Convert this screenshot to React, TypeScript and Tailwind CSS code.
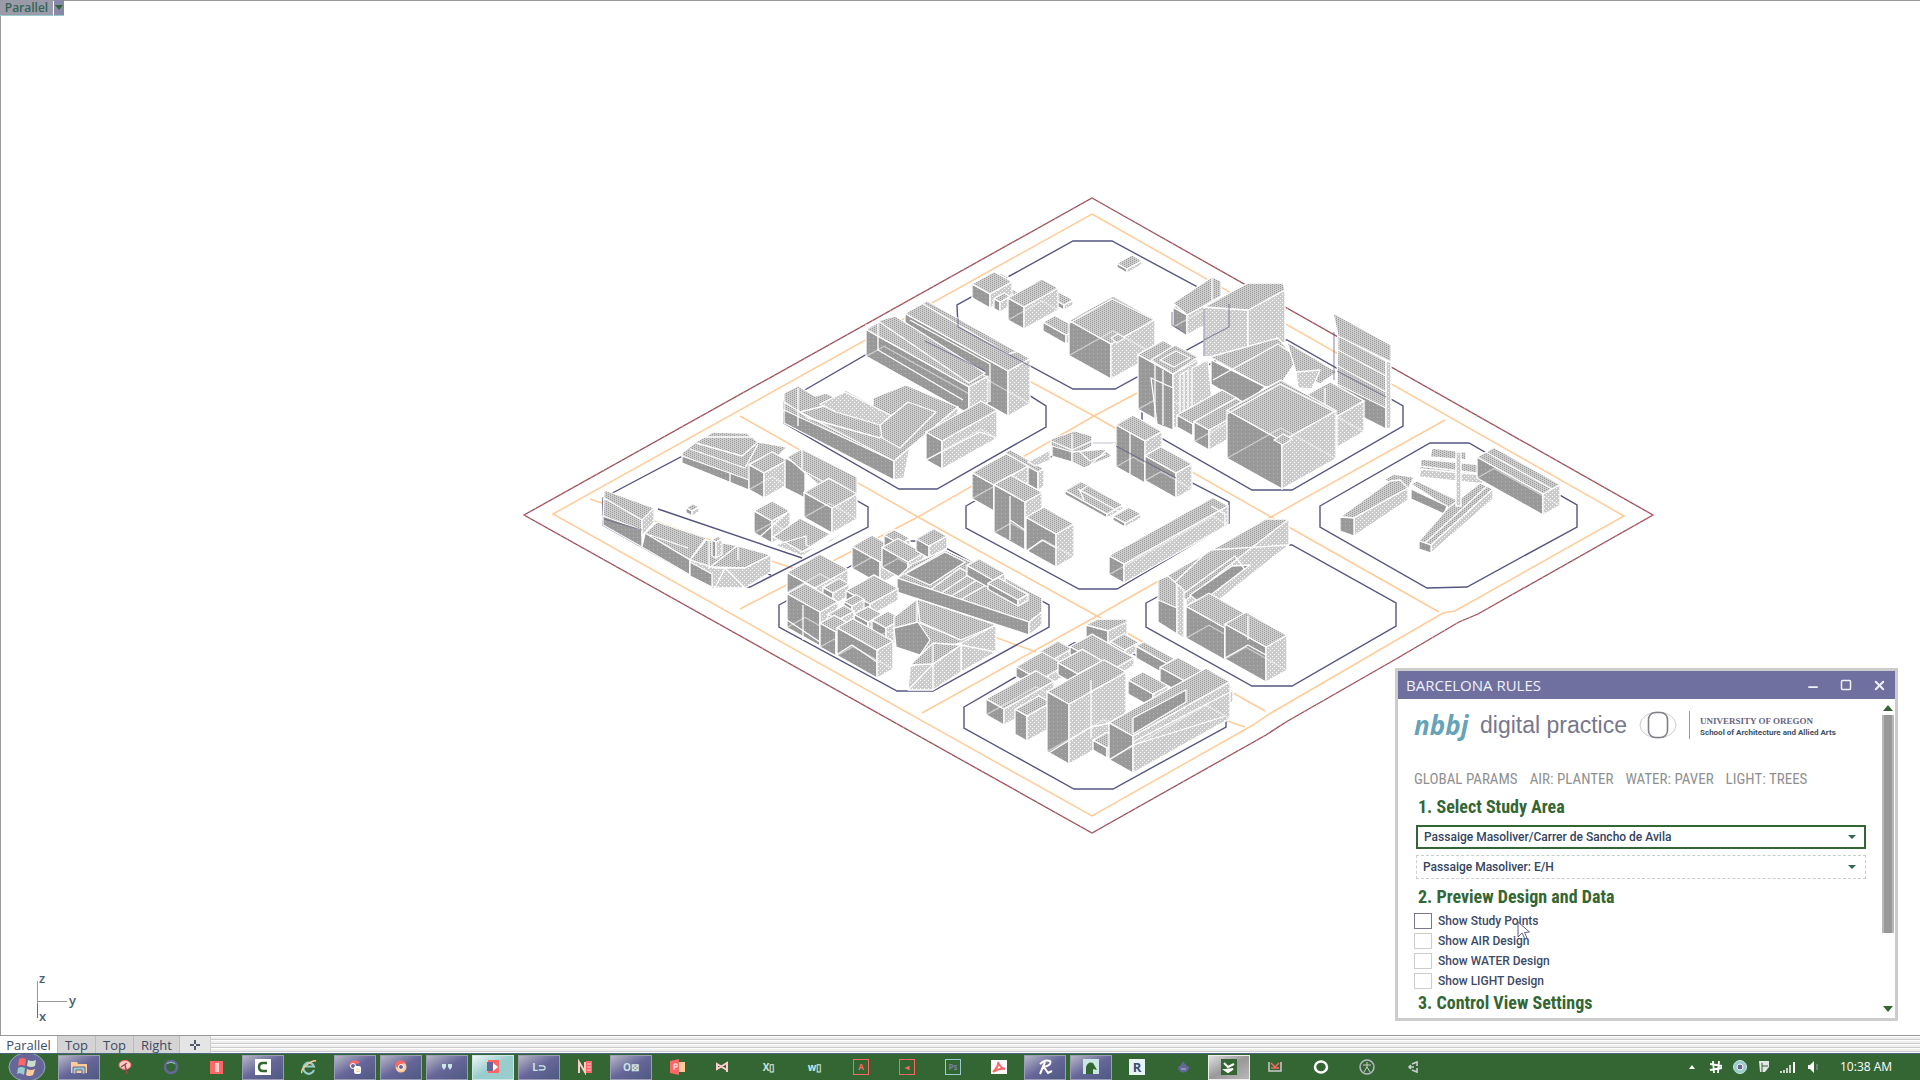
import { useState } from "react";
import type { ReactNode } from "react";
import { Minus, Square, X } from "lucide-react";

type Pt = [number, number];

// front top corner x/y, extent to the left, extent to the right, height
type BoxData = [number, number, number, number, number];

type Tone = "top" | "dark" | "light";
type Shape = { box: BoxData } | { poly: string; tone: Tone } | { line: string };

const SLOPE = 0.56;

const FILLS: Record<Tone, string> = {
  top: "url(#tone-top)",
  dark: "url(#tone-dark)",
  light: "url(#tone-light)",
};

const BLOCKS = [
  "1073,241 1112,241 1229,304 1229,327 1115,389 1073,389 958,327 957,305",
  "784,402 900,335 935,335 1046,406 1046,427 937,489 899,489 784,423",
  "1142,405 1250,340 1287,340 1403,406 1403,426 1292,490 1252,490 1142,427",
  "603,498 713,440 749,440 868,507 868,527 750,587 713,587 603,525",
  "966,506 1075,443 1115,443 1229,502 1229,523 1117,589 1079,589 966,528",
  "1320,506 1430,443 1469,443 1577,505 1577,527 1467,587 1427,588 1320,527",
  "1146,603 1254,545 1292,545 1396,603 1396,626 1292,686 1252,686 1146,627",
  "779,605 897,541 933,541 1049,605 1049,627 933,691 897,691 779,627",
  "964,707 1074,643 1113,643 1226,704 1226,727 1113,789 1074,789 964,728",
];

const STREETS = [
  "740,416 918,517 1097,616 1265,711",
  "1005,368 1094,416 1271,517 1439,612",
  "1445,420 1271,517 1097,616 922,713",
  "1137,393 1094,416 918,517 740,609",
  "590,499 795,569",
  "986,634 1036,652",
  "1186,707 1245,727",
];

const box = (...b: BoxData): Shape => ({ box: b });
const top = (poly: string): Shape => ({ poly, tone: "top" });
const dark = (poly: string): Shape => ({ poly, tone: "dark" });
const light = (poly: string): Shape => ({ poly, tone: "light" });
const line = (l: string): Shape => ({ line: l });

// back to front
const CITY: Shape[] = [
  // north block
  box(1127, 269, 10, 15, 4),
  box(1003, 281, 8, 6, 8),
  box(1010, 299, 16, 10, 8),
  box(990, 294, 18, 22, 14),
  box(1000, 302, 6, 10, 10),
  box(1064, 305, 28, 9, 5),
  box(1024, 307, 16, 34, 22),
  box(1066, 335, 23, 12, 9),
  box(1111, 344, 42, 44, 35),
  top("1111,338 1118,334 1125,338 1117,343"),
  line("1068,324 1112,299 1155,320"),
  box(1187, 315, 14, 34, 20),
  top("1173,303 1212,277 1221,281 1221,296 1187,315"),
  line("1212,277 1212,300"),

  // north west block
  box(1008, 371, 103, 22, 45),
  line("923,304 1008,354 1030,348"),
  line("905,335 990,381"),
  line("910,320 990,364 990,402"),
  dark("866,325 905,340 985,381 969,387"),
  box(969, 387, 103, 18, 27),
  top("878,321 895,316 985,373 969,383"),
  line("878,322 878,350 963,400"),
  light("969,387 988,376 988,402 969,412"),
  top("784,393 798,386 815,396 826,393 836,398 845,390 873,405 873,398 906,385 958,407 900,456 894,462 784,412"),
  top("800,412 840,402 886,427 880,438 808,418"),
  light("820,404 845,392 896,418 890,428 836,412"),
  top("880,425 908,402 936,412 900,448 882,438"),
  dark("784,410 894,461 894,480 784,423"),
  light("894,461 958,407 958,416 910,447 904,478 894,480"),
  line("798,388 798,426"),
  line("784,402 800,412 894,461"),
  line("906,479 935,480"),
  box(942, 441, 16, 55, 28),
  line("926,460 980,432 997,438"),

  // north east block
  light("1204,307 1248,310 1248,355 1204,357"),
  light("1248,310 1285,290 1285,342 1248,355"),
  top("1204,307 1248,283 1283,283 1285,290 1248,310"),
  top("1210,357 1278,338 1297,360 1280,385 1265,387"),
  dark("1211,360 1265,387 1245,405 1211,384"),
  line("1213,380 1278,344 1337,384"),
  top("1287,342 1337,372 1320,384 1296,372"),
  light("1296,372 1320,370 1312,389 1298,388"),
  dark("1338,336 1386,361 1386,429 1337,404"),
  top("1338,336 1386,361 1386,408 1337,384"),
  top("1333,313 1391,345 1391,362 1338,336"),
  light("1386,361 1391,362 1391,428 1386,429"),
  line("1338,350 1386,376"),
  line("1338,366 1386,392"),
  box(1173, 374, 35, 25, 55),
  dark("1151,378 1173,388 1173,430 1157,424"),
  top("1151,360 1175,345 1198,357 1173,374"),
  top("1160,360 1176,351 1190,358 1174,367"),
  light("1180,375 1188,370 1188,418 1180,414"),
  light("1192,368 1208,360 1212,400 1192,410"),
  line("1155,364 1155,418"),
  line("1163,370 1163,425"),
  line("1184,372 1184,420"),
  box(1193, 424, 16, 45, 12),
  box(1209, 430, 15, 42, 20),
  box(1337, 416, 34, 27, 31),
  line("1325,388 1325,430"),
  box(1282, 441, 55, 54, 48),
  top("1274,440 1283,434 1292,439 1283,445"),
  line("1227,414 1280,384 1335,412"),

  // west block
  top("682,453 696,442 713,432 747,433 758,442 787,447 764,470 749,485 682,456"),
  line("696,443 742,456 758,442"),
  line("700,437 752,437"),
  line("690,449 745,468 758,444"),
  dark("682,456 749,480 749,490 682,463"),
  line("730,473 730,484"),
  box(764, 473, 15, 23, 25),
  dark("785,458 805,468 805,498 785,488"),
  top("787,457 802,449 857,477 857,497 832,508 822,488"),
  line("802,449 802,470 857,500"),
  box(832, 508, 28, 25, 25),
  box(772, 521, 18, 18, 22),
  line("755,541 790,510"),
  top("773,537 800,518 830,534 802,552"),
  light("775,545 802,556 857,524 832,541 802,552 785,542"),
  line("782,543 806,536 806,545 815,548"),
  box(692, 511, 6, 7, 5),
  top("604,490 654,508 642,522 604,500"),
  top("604,498 642,520 642,535 603,520"),
  dark("603,516 642,530 642,547 603,525"),
  light("642,520 654,508 654,522 642,536"),
  top("645,533 657,522 706,538 690,560"),
  dark("645,533 690,560 690,575 642,547"),
  line("650,535 688,548"),
  top("690,560 706,540 735,545 771,555 745,568 712,567"),
  light("690,560 715,568 745,568 771,555 771,572 745,588 715,588 690,575"),
  dark("690,562 712,574 712,587 690,576"),
  line("709,540 709,568 738,545 738,560"),
  line("715,588 725,568 745,588"),
  box(716, 542, 4, 6, 16),

  // centre block
  top("1051,439 1075,431 1092,436 1092,446 1075,455 1051,452"),
  line("1051,441 1072,450 1092,441"),
  line("1072,434 1072,466"),
  dark("1052,446 1072,452 1072,462 1052,456"),
  top("1072,452 1104,449 1112,456 1084,468 1072,462"),
  line("1080,452 1090,461 1106,454"),
  line("1092,443 1115,443 1090,465"),
  box(1038, 472, 34, 6, 18),
  light("1028,462 1050,450 1050,460 1036,466"),
  box(994, 485, 22, 34, 26),
  box(1025, 502, 31, 17, 48),
  line("1010,496 1010,540"),
  line("1025,530 1010,520"),
  box(1056, 534, 30, 18, 33),
  line("1026,552 1042,540 1056,548"),
  box(1145, 441, 29, 17, 42),
  line("1130,432 1130,474"),
  box(1176, 473, 31, 16, 25),
  box(1107, 514, 42, 16, 4),
  line("1078,489 1118,511"),
  line("1090,484 1080,491 1084,500"),
  box(1125, 523, 12, 16, 4),
  box(1124, 564, 15, 104, 19),
  line("1211,506 1225,514 1225,526"),

  // east block
  top("1432,448 1466,452 1466,460 1430,457"),
  top("1421,459 1484,465 1484,482 1419,476"),
  line("1419,466 1484,474"),
  light("1421,469 1484,475 1484,484 1419,477"),
  box(1543, 494, 66, 17, 21),
  line("1486,452 1552,489"),
  top("1384,480 1394,474 1414,477 1408,489 1396,484"),
  top("1340,517 1354,518 1408,488 1400,480 1390,481"),
  light("1354,518 1408,488 1408,500 1354,536"),
  dark("1340,517 1354,518 1354,536 1340,531"),
  top("1411,484 1417,481 1461,502 1455,509 1447,507"),
  dark("1411,489 1447,506 1444,514 1411,499"),
  top("1419,541 1431,545 1493,489 1480,483 1447,509"),
  light("1431,545 1493,489 1493,499 1431,553"),
  dark("1419,541 1431,545 1431,553 1419,549"),
  line("1425,543 1487,486"),
  light("1456,452 1461,452 1461,506 1456,506"),

  // south east block
  light("1289,519 1289,545 1214,604 1186,610 1186,590"),
  top("1159,580 1168,575 1266,519 1289,519 1250,549 1186,600"),
  line("1175,582 1209,550 1289,545"),
  dark("1190,595 1232,566 1250,565 1200,603"),
  line("1180,596 1235,556 1245,570"),
  top("1158,580 1168,576 1177,584 1177,610 1158,602"),
  dark("1158,600 1177,608 1177,634 1158,622"),
  light("1177,584 1184,590 1184,638 1177,634"),
  box(1225, 628, 39, 23, 32),
  box(1266, 647, 41, 21, 35),
  line("1225,658 1248,645 1266,655"),
  line("1248,616 1248,640"),

  // south west block
  box(880, 562, 28, 20, 22),
  box(900, 544, 16, 10, 12),
  box(908, 562, 26, 16, 20),
  box(929, 546, 13, 18, 12),
  top("897,578 912,564 945,550 1000,575 1042,598 1042,612 1029,622"),
  dark("905,574 945,552 965,562 930,585"),
  line("897,578 945,550"),
  line("930,590 960,568 990,585"),
  line("940,594 968,575"),
  line("950,597 977,580"),
  line("960,600 986,585"),
  box(993, 580, 26, 12, 10),
  box(1018, 600, 30, 10, 6),
  dark("897,578 1029,622 1029,635 897,592"),
  light("1029,622 1042,612 1042,625 1029,635"),
  box(815, 588, 28, 33, 20),
  box(833, 593, 10, 16, 12),
  box(870, 604, 24, 28, 12),
  box(852, 606, 8, 12, 14),
  box(820, 612, 33, 18, 34),
  line("787,620 820,642"),
  line("803,605 803,640"),
  box(868, 622, 14, 14, 14),
  box(886, 628, 14, 16, 20),
  box(838, 620, 10, 16, 16),
  top("894,617 917,599 996,625 961,643 930,650 918,655 894,640"),
  top("917,599 996,625 961,640 920,622"),
  light("996,625 996,652 961,672 961,643"),
  line("917,599 917,622 961,640"),
  dark("894,628 918,622 930,640 920,655 896,647"),
  light("961,643 961,672 933,690 908,690 910,667"),
  top("910,665 933,643 961,645 933,664"),
  line("933,643 933,690"),
  line("908,690 933,664 961,645 996,652"),
  box(836, 632, 16, 14, 24),
  box(877, 650, 40, 16, 28),
  line("836,655 852,645 877,662"),

  // south block
  top("1086,625 1098,619 1127,619 1127,623 1108,631"),
  dark("1086,625 1108,631 1108,645 1086,640"),
  light("1108,631 1127,622 1127,638 1108,645"),
  box(1125, 650, 15, 14, 8),
  box(1052, 660, 14, 20, 14),
  box(1168, 664, 32, 8, 12),
  box(1112, 670, 42, 22, 8),
  box(1040, 680, 24, 26, 10),
  box(1078, 674, 20, 24, 12),
  box(1153, 694, 25, 15, 14),
  box(1215, 698, 55, 18, 14),
  box(1004, 709, 18, 50, 16),
  box(1027, 716, 12, 24, 25),
  box(1069, 704, 22, 57, 60),
  line("1091,680 1091,738"),
  line("1047,754 1091,727 1126,720"),
  box(1107, 748, 14, 14, 10),
  box(1133, 736, 24, 97, 37),
  dark("1133,734 1186,702 1186,690 1133,718"),
  line("1109,760 1133,745 1226,716"),
  line("1133,742 1234,690"),
];

function pts(list: Pt[]) {
  return list.map((p) => p.join(",")).join(" ");
}

function Box({ data }: { data: BoxData }) {
  const [x, y, lw, rw, h] = data;
  const front: Pt = [x, y];
  const left: Pt = [x - lw, y - lw * SLOPE];
  const right: Pt = [x + rw, y - rw * SLOPE];
  const back: Pt = [x - lw + rw, y - (lw + rw) * SLOPE];
  const down = (p: Pt): Pt => [p[0], p[1] + h];
  const seeThrough = Math.min(lw, rw) > 12 && h > 15;

  return (
    <g>
      <polygon points={pts([left, front, down(front), down(left)])} fill={FILLS.dark} />
      <polygon points={pts([front, right, down(right), down(front)])} fill={FILLS.light} />
      <polygon points={pts([left, back, right, front])} fill={FILLS.top} />
      {seeThrough && (
        <polyline
          points={pts([down(left), down(back), down(right)])}
          fill="none"
          strokeOpacity={0.5}
        />
      )}
    </g>
  );
}

function CityDrawing() {
  return (
    <svg
      viewBox="0 0 1920 1035"
      className="block size-full"
      role="img"
      aria-label="Axonometric model of nine city blocks"
    >
      <defs>
        <pattern id="tone-top" width="4" height="2" patternUnits="userSpaceOnUse">
          <rect width="4" height="2" fill="#cccccc" />
          <rect width="1" height="1" fill="#999999" />
          <rect x="2" y="1" width="1" height="1" fill="#999999" />
        </pattern>
        <pattern id="tone-dark" width="4" height="4" patternUnits="userSpaceOnUse">
          <rect width="4" height="4" fill="#999999" />
          <rect x="1" y="1" width="1" height="1" fill="#b4b4b4" />
        </pattern>
        <pattern id="tone-light" width="4" height="4" patternUnits="userSpaceOnUse">
          <rect width="4" height="4" fill="#cccccc" />
          <rect width="1" height="1" fill="#ffffff" />
          <rect x="2" y="2" width="1" height="1" fill="#ffffff" />
        </pattern>
      </defs>

      {/* site boundary */}
      <polygon
        points="1092,198 1653,515 1478,614 1459,622 1396,659 1286,722 1266,735 1092,833 524,515"
        fill="none"
        stroke="#8a5560"
        strokeWidth="1.3"
      />
      <polygon
        points="1092,198 1653,515 1478,614 1459,622 1396,659 1286,722 1266,735 1092,833 524,515"
        fill="none"
        stroke="#ff6666"
        strokeDasharray="2 5"
      />
      <g fill="none" stroke="#ffcc99" strokeWidth="1.5">
        <polygon points="1092,214 1624,516 1455,611 1443,613 1271,713 1253,725 1092,816 553,514" />
        {STREETS.map((s) => (
          <polyline key={s} points={s} />
        ))}
      </g>
      <g fill="none" stroke="#555580" strokeWidth="1.4">
        {BLOCKS.map((b) => (
          <polygon key={b} points={b} />
        ))}
        <polyline points="658,509 802,558" />
        <polyline points="603,518 771,575" />
      </g>

      <g stroke="#ffffff" strokeWidth="1.3" strokeLinejoin="round">
        {CITY.map((s, i) => {
          if ("box" in s) return <Box key={i} data={s.box} />;
          if ("poly" in s) return <polygon key={i} points={s.poly} fill={FILLS[s.tone]} />;
          return <polyline key={i} points={s.line} fill="none" />;
        })}
      </g>

      {/* lines that read through the transparent volumes */}
      <g fill="none" stroke="#555580" strokeOpacity="0.6" strokeWidth="1.2">
        <path d="M925 341 L985 371 M1204 309 V356 M1334 332 V380 M1337 371 L1386 397 M604 519 L642 530 M1172 312 V325 L1186 334" />
        <path d="M958 318 V327 L1030 366 M1116 446 L1176 478 M1229 304 V327 L1204 340" />
      </g>

      {/* world axes */}
      <g stroke="#999999" fill="none">
        <path d="M37.500 981 V1018 M37 1001.500 H67" />
      </g>
      <path d="M37.500 1004 V1018" stroke="#666699" />
      <g className="font-['Open_Sans',sans-serif] text-[13px] font-semibold" fill="#4c5c70">
        <text x="39" y="983">z</text>
        <text x="69" y="1005">y</text>
        <text x="39" y="1021">x</text>
      </g>
    </svg>
  );
}

const STUDY_AREAS = ["Passaige Masoliver/Carrer de Sancho de Avila"];
const PASSAGES = ["Passaige Masoliver: E/H"];
const PREVIEWS = ["Show Study Points", "Show AIR Design", "Show WATER Design", "Show LIGHT Design"];
const SECTIONS = ["GLOBAL PARAMS", "AIR: PLANTER", "WATER: PAVER", "LIGHT: TREES"];

function Heading({ children }: { children: ReactNode }) {
  return (
    <h2 className="pl-1 font-['Liberation_Sans_Narrow','Roboto_Condensed',Roboto,sans-serif] text-lg leading-6 font-bold whitespace-nowrap text-[#336633]">
      {children}
    </h2>
  );
}

function Dropdown({ label, options, active }: { label: string; options: string[]; active?: boolean }) {
  return (
    <div className="relative">
      <select
        aria-label={label}
        className={`block h-6 w-full appearance-none bg-white pl-1.5 font-[Roboto,sans-serif] text-[12px] font-medium text-[#33445c] ${
          active ? "border-2 border-[#336633]" : "border border-dashed border-[#cccccc]"
        }`}
      >
        {options.map((o) => (
          <option key={o}>{o}</option>
        ))}
      </select>
      <svg viewBox="0 0 8 4" className="pointer-events-none absolute top-2.5 right-2.5 h-1 w-2">
        <path d="M0 0 H8 L4 4 Z" fill="#336655" />
      </svg>
    </div>
  );
}

function RulesWindow() {
  const [checked, setChecked] = useState<string[]>([]);

  const toggle = (name: string) =>
    setChecked((c) => (c.includes(name) ? c.filter((n) => n !== name) : [...c, name]));

  return (
    <section
      aria-label="Barcelona Rules"
      className="absolute right-[22px] bottom-3.5 flex h-[353px] w-[503px] flex-col border-3 border-[#cccccc] bg-white"
    >
      <header className="flex h-7 shrink-0 items-center bg-[#7070a0] pr-2 pl-2 text-[#eef2f7]">
        <h1 className="flex-1 text-[15px]">BARCELONA RULES</h1>
        <div className="flex gap-5">
          <button aria-label="Minimize" className="pt-1"><Minus size={14} strokeWidth={3} /></button>
          <button aria-label="Maximize"><Square size={12} strokeWidth={3} /></button>
          <button aria-label="Close"><X size={15} strokeWidth={3} /></button>
        </div>
      </header>

      <div className="flex min-h-0 flex-1">
        <div className="min-w-0 flex-1 overflow-hidden pl-4">
          <div className="flex h-14 items-center pb-1">
            <span className="w-[66px] font-['Open_Sans',sans-serif] text-[26px] font-bold text-[#66a3b8] italic">nbbj</span>
            <span className="font-['Liberation_Sans',sans-serif] text-[23px] text-[#77778c]">digital practice</span>
            <svg viewBox="0 0 38 30" className="ml-3 h-[30px] w-[38px]" fill="none">
              <ellipse cx="19" cy="15" rx="18" ry="13" stroke="#cccccc" />
              <rect x="9.500" y="2.500" width="19" height="25" rx="7" stroke="#808088" strokeWidth="1.6" />
            </svg>
            <div className="ml-3 flex h-7 flex-col justify-end border-l border-[#999999] pl-2.5 whitespace-nowrap">
              <span className="font-['Liberation_Serif',serif] text-[9px] leading-3 font-bold text-[#666680]">UNIVERSITY OF OREGON</span>
              <span className="font-[Roboto,sans-serif] text-[8px] leading-3 font-bold text-[#3d5060]">School of Architecture and Allied Arts</span>
            </div>
          </div>

          <nav className="mt-3 flex gap-3 font-['Liberation_Sans_Narrow','Roboto_Condensed',Roboto,sans-serif] text-[15px] leading-6 whitespace-nowrap text-[#909090]">
            {SECTIONS.map((s) => (
              <a key={s} href="#params">{s}</a>
            ))}
          </nav>

          <div className="w-[452px] pt-1">
            <Heading>1. Select Study Area</Heading>
            <div className="flex flex-col gap-1.5 pt-1.5 pl-0.5">
              <Dropdown label="Study area" options={STUDY_AREAS} active />
              <Dropdown label="Passage" options={PASSAGES} />
            </div>
            <div className="pt-1.5 pb-0.5">
              <Heading>2. Preview Design and Data</Heading>
            </div>
            {PREVIEWS.map((p, i) => (
              <label key={p} className="flex h-5 items-center gap-1.5 font-[Roboto,sans-serif] text-[12px] font-medium text-[#3d4a66]">
                <input
                  type="checkbox"
                  checked={checked.includes(p)}
                  onChange={() => toggle(p)}
                  className={`h-4 w-[18px] appearance-none border checked:bg-[#336633] ${
                    i === 0 ? "border-[#777790]" : "border-[#cccccc]"
                  }`}
                />
                {p}
              </label>
            ))}
            <Heading>3. Control View Settings</Heading>
          </div>
        </div>

        <div className="flex w-3.5 flex-col items-center justify-between pt-1.5 pb-1.5">
          <svg viewBox="0 0 10 6" className="h-1.5 w-2.5"><path d="M0 6 H10 L5 0 Z" fill="#336633" /></svg>
          <div className="mt-1 mb-auto h-[218px] w-3 border-x-2 border-[#b8b8b8] bg-[#999999]" />
          <svg viewBox="0 0 10 6" className="h-1.5 w-2.5"><path d="M0 0 H10 L5 6 Z" fill="#336633" /></svg>
        </div>
      </div>

      <svg viewBox="0 0 14 20" className="pointer-events-none absolute top-[250px] left-[119px] h-5 w-3.5">
        <path d="M1 1 V16 L5 12 L8 18 L10 17 L7.500 11.500 L12.500 11 Z" fill="#fff" stroke="#5c5c80" />
      </svg>
    </section>
  );
}

function Glyph({ children, color, size = "text-[10px]" }: { children: ReactNode; color: string; size?: string }) {
  return <span className={`${size} ${color} font-bold`}>{children}</span>;
}

function Framed({ children, color }: { children: ReactNode; color: string }) {
  return (
    <span className={`flex size-4 items-center justify-center border ${color} text-[8px] font-bold`}>{children}</span>
  );
}

function Svg({ children }: { children: ReactNode }) {
  return <svg viewBox="0 0 16 16" className="size-4" fill="none">{children}</svg>;
}

const chrome = (
  <Svg>
    <circle cx="8" cy="8" r="5.500" fill="#ffcc99" />
    <path d="M2 7 A6 6 0 0 1 13 4 L8 5 L5 9 Z" fill="#ff6666" />
    <circle cx="8" cy="8" r="2.500" fill="#666699" stroke="#fff" />
  </Svg>
);

const canary = (
  <Svg>
    <path d="M2 7 A6 6 0 0 1 13 4 L8 5 L5 9 Z" fill="#ff6666" />
    <circle cx="6" cy="7" r="2.500" fill="#666699" stroke="#fff" />
    <rect x="7" y="7" width="7" height="8" rx="2" fill="#ffffff" />
    <path d="M9 10 H13 M9 12.500 H13" stroke="#ffcc99" />
  </Svg>
);

interface AppIcon {
  name: string;
  icon: ReactNode;
  state?: "open" | "active" | "bright";
}

const APPS: AppIcon[] = [
  {
    name: "Explorer",
    state: "open",
    icon: <Svg><path d="M0 3 H6 L7 5 H16 V14 H0 Z" fill="#ffcc99" /><path d="M2 8 H14 V15 H11 V11 H5 V15 H2 Z" fill="#99cccc" stroke="#666699" /></Svg>,
  },
  { name: "Snipping", icon: <Svg><ellipse cx="8" cy="6" rx="6" ry="4.500" fill="#ffcccc" stroke="#ff6666" /><path d="M4 8 L10 4 M8 6 L10 15" stroke="#994c4c" strokeWidth="1.5" /></Svg> },
  { name: "Cortana", icon: <Svg><circle cx="8" cy="8" r="6" stroke="#666699" strokeWidth="2.500" /><path d="M4 4.500 Q8 2 12 4.500" stroke="#99cccc" /></Svg> },
  { name: "Reader", icon: <Svg><rect x="1" y="2" width="13" height="13" fill="#ff6666" /><rect x="6" y="4" width="4" height="9" fill="#ffcccc" /></Svg> },
  { name: "Camtasia", state: "open", icon: <Svg><rect width="16" height="16" fill="#fff" /><path d="M12 4 H8 Q4 4 4 8 Q4 12 8 12 H12" stroke="#336633" strokeWidth="2.500" /></Svg> },
  { name: "Internet Explorer", icon: <Svg><path d="M13 11 A5.500 5.500 0 1 1 13 7.500 H4" stroke="#99cccc" strokeWidth="2.200" /><path d="M1 14 Q-1 11 7 5 Q13 1 15 2" stroke="#ffcc99" strokeWidth="1.500" /></Svg> },
  { name: "Chrome Canary", state: "open", icon: canary },
  { name: "Chrome", state: "open", icon: chrome },
  { name: "Grasshopper", state: "open", icon: <Svg><path d="M3 5 H7 V8 L5 11 L3 8 Z M9 5 H13 V8 L11 11 L9 8 Z" fill="#cce5e5" /></Svg> },
  { name: "Recorder", state: "active", icon: <Svg><rect x="3" y="1" width="11" height="13" fill="#ff6666" /><rect x="2" y="3" width="6" height="9" fill="#666699" /><path d="M8 4 L13 8 L8 12" fill="#fff" /></Svg> },
  { name: "Lync", state: "open", icon: <Glyph color="text-[#cce5e5]">L⊃</Glyph> },
  { name: "OneNote", icon: <Svg><path d="M2 14 V3 L8 13 V3" stroke="#ffcccc" strokeWidth="2" /><rect x="9" y="2" width="6" height="12" fill="#ff6666" /><path d="M10 5 H14 M10 8 H14 M10 11 H14" stroke="#ffcccc" /></Svg> },
  { name: "Outlook", state: "open", icon: <Glyph color="text-[#cce5e5]">O⊠</Glyph> },
  { name: "PowerPoint", icon: <Svg><path d="M1 2 L10 0 V16 L1 14 Z" fill="#ff6666" /><rect x="10" y="3" width="6" height="10" fill="#ffcc99" /><path d="M5 11 V5 H8 V8 H5" stroke="#fff" /></Svg> },
  { name: "Visual Studio", icon: <Svg><path d="M2 5 L12 11 V4 L2 10 Z M12 3 V13" stroke="#ffcccc" strokeWidth="2" /></Svg> },
  { name: "Excel", icon: <Glyph color="text-[#cce5e5]">X▯</Glyph> },
  { name: "Word", icon: <Glyph color="text-[#cce5e5]">w▯</Glyph> },
  { name: "AutoCAD", icon: <Framed color="border-[#ff6666] text-[#ff6666]">A</Framed> },
  { name: "Revit Link", icon: <Framed color="border-[#ff6666] text-[#ff6666]">◂</Framed> },
  { name: "Photoshop", icon: <Framed color="border-[#99cccc] text-[#7780b0]">Ps</Framed> },
  { name: "Acrobat", icon: <Svg><rect x="0" y="1" width="16" height="14" fill="#fff" /><path d="M2 13 Q8 7 7 3 Q9 9 14 10 Q8 9 2 13" stroke="#ff6666" strokeWidth="2" /></Svg> },
  { name: "Rhino", state: "open", icon: <Svg><path d="M3 15 L8 3 M3 5 Q8 0 13 2 Q15 6 7 8 L11 14 L15 12" stroke="#fff" strokeWidth="2" /></Svg> },
  { name: "Rhino 5", state: "open", icon: <Svg><rect width="16" height="15" fill="#cce5e5" /><path d="M3 15 V8 Q5 2 10 4 L14 11 L10 10 V15 Z" fill="#336633" /></Svg> },
  { name: "Revit", icon: <span className="flex h-4 w-4 items-center justify-center bg-[#e8f3f3] text-[13px] font-bold text-[#3c4a78]">R</span> },
  { name: "Flame", icon: <Svg><path d="M8 2 Q9 5 14 8 A5.500 5.500 0 1 1 3 8 Q6 7 8 2" fill="#666699" /><path d="M6 10 H11" stroke="#99cccc" /></Svg> },
  { name: "Grasshopper Player", state: "bright", icon: <Svg><rect width="16" height="16" fill="#336633" /><path d="M3 4 L7 8 L13 5 M4 11 L12 10 L7 13 Z" stroke="#fff" strokeWidth="2" /></Svg> },
  { name: "Studio", icon: <Svg><path d="M2 3 V12 H14 V3" stroke="#cccccc" strokeWidth="1.500" /><path d="M4 4 L8 8 L12 4 M4 9 H12" stroke="#ff6666" strokeWidth="1.500" /></Svg> },
  { name: "Opera", icon: <Svg><ellipse cx="8" cy="8" rx="6" ry="5.500" stroke="#fff" strokeWidth="2.500" /></Svg> },
  { name: "Accessibility", icon: <Svg><circle cx="8" cy="8" r="7" stroke="#b8b8c4" strokeWidth="1.500" /><path d="M8 3 V9 M4 6 H12 M8 8 L5 13 M8 8 L11 13" stroke="#cccccc" /></Svg> },
  { name: "Unity", icon: <Svg><path d="M7 5 L12 3 V7 M7 11 L12 13 V9 M6 6 L4 8 L6 10 M5 8 H9" stroke="#cccccc" strokeWidth="1.600" /></Svg> },
];

const APP_STATES = {
  open: "border border-[#9c9cb8] bg-linear-to-br from-[#b8b8c4] via-[#666699] to-[#4d5980]",
  active: "border border-[#cce5e5] bg-linear-to-br from-[#eef6f6] via-[#99cccc] to-[#99cccc]",
  bright: "border border-[#eeeeee] bg-linear-to-br from-[#e0e0e0] via-[#999999] to-[#b8b8b8]",
};

function Taskbar() {
  return (
    <footer className="flex h-[27px] shrink-0 items-center border-t border-[#4c6680] bg-[#336633] text-white">
      <button aria-label="Start" className="ml-2 h-[27px] w-[38px]">
        <svg viewBox="0 0 38 27" className="h-full w-full">
          <ellipse cx="19" cy="13" rx="18" ry="14" fill="#666699" stroke="#99aabb" />
          <path d="M11 5 Q15 3 18 5 L17 12 Q13 10 10 12 Z" fill="#ff6666" />
          <path d="M20 6 Q24 8 28 6 L27 12 Q23 14 19 12 Z" fill="#ccddcc" />
          <path d="M10 14 Q13 12 17 14 L16 21 Q12 18 9 20 Z" fill="#99cccc" />
          <path d="M19 15 Q23 17 27 15 L25 21 Q21 23 18 21 Z" fill="#ffcc99" />
        </svg>
      </button>
      <div className="ml-2.5 flex">
        {APPS.map((app) => (
          <div key={app.name} className="flex w-[46px] justify-center">
            <button
              aria-label={app.name}
              className={`flex h-[25px] w-[42px] items-center justify-center leading-none ${app.state ? APP_STATES[app.state] : ""}`}
            >
              {app.icon}
            </button>
          </div>
        ))}
      </div>
      <div className="ml-auto flex items-center gap-2 pr-3.5">
        <Svg><path d="M5 10 L8 6 L11 10 Z" fill="#fff" /></Svg>
        <Svg><path d="M5 2 L6 14 M11 2 L10 14 M2 5 L14 7 M2 11 L14 9" stroke="#fff" strokeWidth="1.800" /></Svg>
        <Svg><circle cx="8" cy="8" r="6.500" fill="#99cccc" stroke="#cce5e5" /><circle cx="8" cy="8" r="3" fill="#666699" stroke="#fff" /></Svg>
        <Svg><path d="M3 2 H13 V8 L9 13 H4 Z" fill="#e5e5e5" /><path d="M6 4 V14 M6 7 H12" stroke="#336633" /></Svg>
        <Svg><path d="M1 14 V12 M4 14 V11 M7 14 V9 M10 14 V6" stroke="#ccd5cc" strokeWidth="2" /><path d="M14 14 V3" stroke="#fff" strokeWidth="2" /></Svg>
        <Svg><path d="M4 6 H6 L10 2 V14 L6 10 H4 Z" fill="#fff" /><path d="M13 5 V11" stroke="#9999b8" /></Svg>
        <time className="ml-3 w-[66px] text-[12px] whitespace-nowrap">10:38 AM</time>
      </div>
    </footer>
  );
}

const VIEWS = ["Parallel", "Top", "Top", "Right"];

export default function App() {
  const [view, setView] = useState(0);

  return (
    <div className="flex h-screen flex-col overflow-hidden bg-white font-['Open_Sans','Noto_Sans',sans-serif]">
      <main className="relative min-h-0 flex-1 shadow-[inset_1px_1px_0_#999999]">
        <CityDrawing />
        <div className="absolute top-0 left-0 flex h-4 gap-px text-[12px] leading-4 font-semibold text-[#336655]">
          <button className="w-[53px] border-b border-[#99cccc] bg-[#9a9aa8]">Parallel</button>
          <button aria-label="Viewport menu" className="flex w-2.5 items-center justify-center border-b border-[#99cccc] bg-[#8888a8]">
            <svg viewBox="0 0 8 5" className="h-[5px] w-2"><path d="M0 0 H8 L4 5 Z" fill="#336633" /></svg>
          </button>
        </div>
        <RulesWindow />
      </main>

      <div className="flex h-[18px] shrink-0 border-t border-[#999999] bg-[repeating-linear-gradient(0deg,#ffffff_0_1px,#cccccc_1px_2px,#eeeeee_2px_4px)] text-[13px] leading-4 text-[#3d4a66]">
        {VIEWS.map((v, i) => (
          <button
            key={i}
            onClick={() => setView(i)}
            className={`border-r border-[#bbbbbb] ${i === 0 ? "w-[58px]" : i === 3 ? "w-[46px]" : "w-[38px]"} ${
              i === view ? "bg-white" : "bg-[#d4d4d4]"
            }`}
          >
            {v}
          </button>
        ))}
        <button aria-label="New viewport" className="flex w-[31px] items-center justify-center border-r border-[#cccccc] bg-[#e5e5e5]">
          <svg viewBox="0 0 10 10" className="size-2.5"><path d="M5 0 V10 M0 5 H10" stroke="#4c5c70" strokeWidth="2" strokeDasharray="4 2" /></svg>
        </button>
      </div>

      <Taskbar />
    </div>
  );
}
